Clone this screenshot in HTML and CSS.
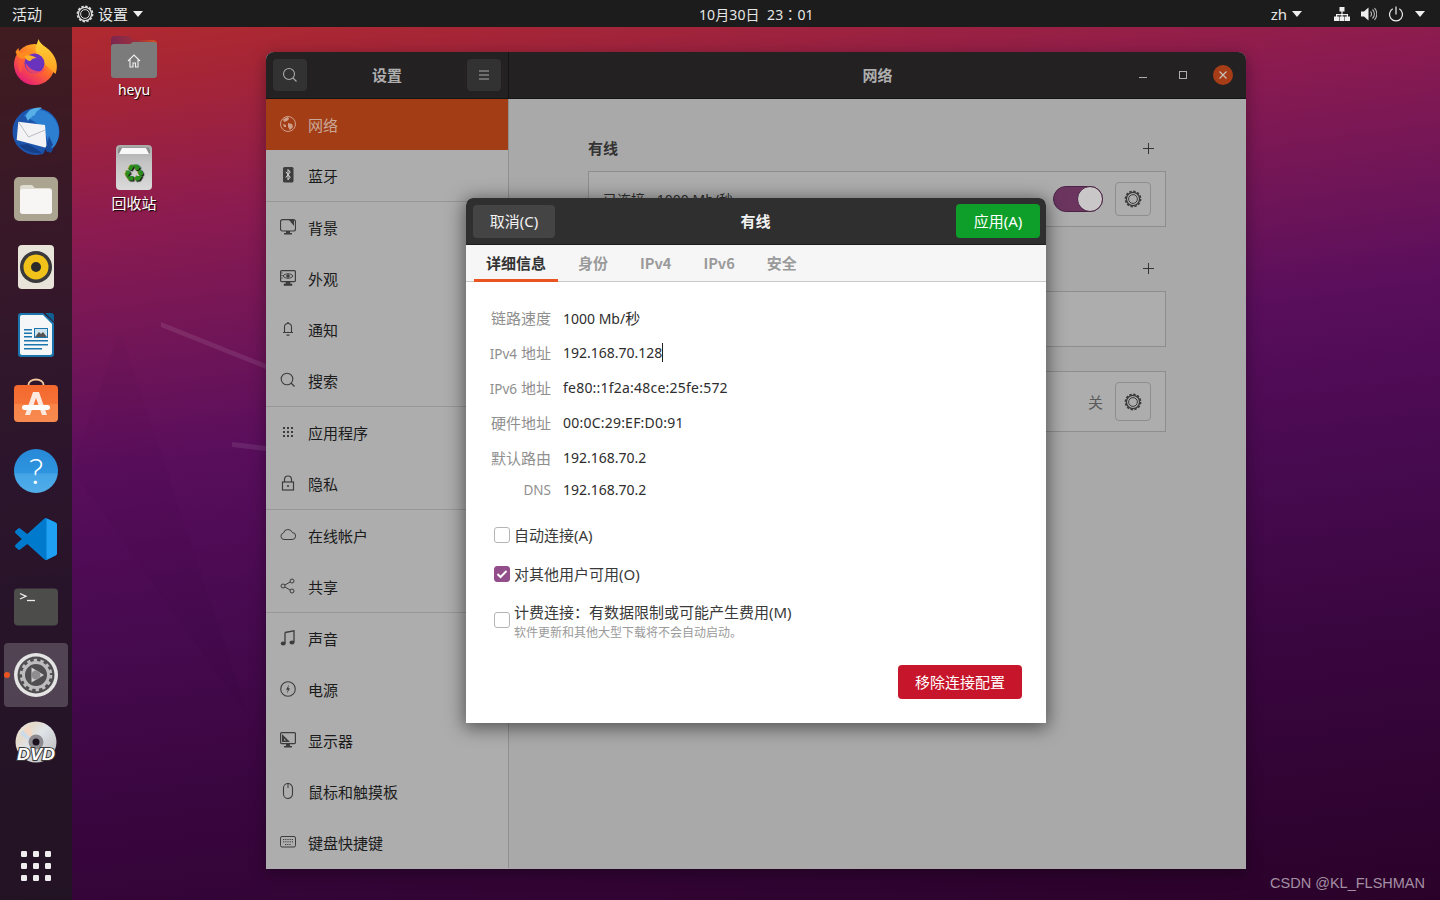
FILE: index.html
```html
<!DOCTYPE html>
<html lang="zh">
<head>
<meta charset="utf-8">
<title>设置</title>
<link rel="stylesheet" href="styles.css">
</head>
<body>
<svg class="defs" width="0" height="0">
  <defs>
    <symbol id="gear" viewBox="0 0 18 18">
      <circle cx="9" cy="9" r="6.6" fill="none" stroke="currentColor" stroke-width="1.3"/>
      <circle cx="9" cy="9" r="7.6" fill="none" stroke="currentColor" stroke-width="1.6" stroke-dasharray="2.4 1.58"/>
      <circle cx="9" cy="9" r="4.4" fill="none" stroke="currentColor" stroke-width="1"/>
    </symbol>
    <symbol id="caret" viewBox="0 0 10 6"><path d="M0 0h10L5 6z" fill="currentColor"/></symbol>
    <linearGradient id="ffbase" x1=".9" y1=".1" x2=".25" y2="1"><stop offset="0" stop-color="#ffc81f"/><stop offset=".5" stop-color="#ff6a2b"/><stop offset="1" stop-color="#e4177f"/></linearGradient>
    <linearGradient id="fftop" x1="0" y1="0" x2="0" y2="1"><stop offset="0" stop-color="#ffd83a"/><stop offset="1" stop-color="#ff9a1f"/></linearGradient>
    <linearGradient id="help" x1="0" y1="0" x2="0" y2="1"><stop offset="0" stop-color="#2789d8"/><stop offset=".55" stop-color="#2f95e0"/><stop offset=".56" stop-color="#43a4e5"/><stop offset="1" stop-color="#52aeea"/></linearGradient>
    <linearGradient id="store" x1="0" y1="0" x2="0" y2="1"><stop offset="0" stop-color="#f4682d"/><stop offset=".5" stop-color="#f57238"/><stop offset=".51" stop-color="#f78447"/><stop offset="1" stop-color="#f78a50"/></linearGradient>
    <linearGradient id="disc" x1="0" y1="0" x2="1" y2="1"><stop offset="0" stop-color="#f3f3f3"/><stop offset=".25" stop-color="#e4d9c9"/><stop offset=".45" stop-color="#dfe3e8"/><stop offset="1" stop-color="#b5b5b5"/></linearGradient>
    <linearGradient id="trash" x1="0" y1="0" x2="0" y2="1"><stop offset="0" stop-color="#a9a9a9"/><stop offset=".4" stop-color="#c4c4c4"/><stop offset="1" stop-color="#dadada"/></linearGradient>
    <linearGradient id="foldertab" x1="0" y1="0" x2="1" y2="0"><stop offset="0" stop-color="#7b2650"/><stop offset=".6" stop-color="#a1303b"/><stop offset="1" stop-color="#d8501f"/></linearGradient>
  </defs>
</svg>

<div class="desktop">
  <svg class="wallpaper" viewBox="0 0 1440 900" aria-hidden="true">
    <path d="M161 322l105 42v5l-105-42z" fill="#fff" opacity=".09"/>
    <path d="M232 442l34 4v5l-34-4z" fill="#fff" opacity=".09"/>
    <path d="M120 330L250 720 72 470z" fill="#000" opacity=".02"/>
  </svg>

  <header class="topbar">
    <div class="bar-left">
      <span class="bar-item activities">活动</span>
      <span class="bar-item appmenu">
        <svg class="bar-gear"><use href="#gear"/></svg>
        <span>设置</span>
        <svg class="caret"><use href="#caret"/></svg>
      </span>
    </div>
    <div class="clock">10月30日&nbsp; 23<span class="tc" lang="zh-Hant-TW">：</span>01</div>
    <div class="bar-right">
      <span class="bar-item ime"><span>zh</span><svg class="caret"><use href="#caret"/></svg></span>
      <span class="tray">
        <svg class="tray-icon" viewBox="0 0 16 16"><path d="M5.5 1h5v4.500h-5zM7.400 5.500h1.200v2.500H14v3h-1.200V9.200H8.600V11H7.400V9.200H3.200V11H2V8h5.400z" fill="currentColor"/><path d="M0 10.500h5V15H0zM5.500 10.500h5V15h-5zM11 10.500h5V15h-5z" fill="currentColor"/></svg>
        <svg class="tray-icon" viewBox="0 0 16 16"><path d="M0 5.500h3L7.500 1.500v13L3 10.500H0z" fill="currentColor"/><path d="M9.500 5.500a3.500 3.500 0 0 1 0 5M11.500 3.500a6.300 6.300 0 0 1 0 9M13.500 2a9 9 0 0 1 0 12" fill="none" stroke="currentColor" stroke-opacity=".75" stroke-width="1.100"/></svg>
        <svg class="tray-icon" viewBox="0 0 16 16"><path d="M4.700 2.800a6.500 6.500 0 1 0 6.600 0" fill="none" stroke="currentColor" stroke-width="1.200"/><path d="M8 .5v8" stroke="currentColor" stroke-width="1.200"/></svg>
        <svg class="caret"><use href="#caret"/></svg>
      </span>
    </div>
  </header>

  <nav class="dock">
    <div class="dock-item">
      <svg class="app app46" viewBox="0 0 46 46">
        <circle cx="23" cy="25.500" r="20.500" fill="url(#ffbase)"/>
        <path d="M27 0c2 7 12 9 16 18 3 6 3 12 1 17l-11-10c-2-6-8-8-9-14 0-4 2-7 3-11z" fill="url(#fftop)"/>
        <path d="M4 13c1-2 2-3 3-4 0 3 1 4 3 5 4-2 7-2 10-1l5 4c-5-1-8 0-11 2l-4 1c-3-1-4-3-6-7z" fill="#ff8a1f"/>
        <path d="M8 18c-2 5-2 11 1 16 2-3 2-7 3-11z" fill="#ff5a3a" opacity=".7"/>
        <circle cx="23" cy="24.500" r="10" fill="#6a33bd"/>
        <path d="M13 17c5-2 9 0 12 2-3 0-5 1-6 3-3 0-5-2-6-5z" fill="#ffb12a"/>
        <path d="M14 24c0 7 5 11 11 11 5 0 9-3 10-8-2 4-6 6-10 5-5-1-8-4-11-8z" fill="#ff4a5c" opacity=".8"/>
      </svg>
    </div>
    <div class="dock-item">
      <svg class="app app48" viewBox="0 0 48 48">
        <circle cx="24" cy="24.500" r="23.500" fill="#1d55ad"/>
        <path d="M12 9C17 2 27 1 35 5c7 4 12 12 12 20 0 7-3 14-9 19 1-4 0-7-2-9-2-10-9-20-24-26z" fill="#2c7fd1"/>
        <path d="M18 3c4-2 8-3 12-2-3 2-6 3-7 7-3 1-6 4-7 6l-2-4c0-3 2-5 4-7z" fill="#56b0e6"/>
        <path d="M6.300 14.700L33 18l1.700 23L4.700 33z" fill="#f3f3f5"/>
        <path d="M6.500 15l10 15 16.500-7" fill="none" stroke="#b9bcc4"/>
        <path d="M7 38l9-1 10 6 4 3c-9 1-18-2-23-8z" fill="#163f8a"/>
        <path d="M34 19l3 10-2 9-5 8 5-2 4 2 3-4-3-2 2-2-4-9z" fill="#184a9c"/>
        <path d="M30 49l4-7 2 7zM39 46l3-6 3 3-1 4z" fill="#37182a"/>
      </svg>
    </div>
    <div class="dock-item">
      <svg class="app app44" viewBox="0 0 44 44">
        <rect width="44" height="44" rx="5" fill="#aaa491"/>
        <path d="M6 11a3 3 0 0 1 3-3h9l3 3h14a3 3 0 0 1 3 3v20a3 3 0 0 1-3 3H9a3 3 0 0 1-3-3z" fill="#dfdcd2"/>
        <path d="M6 15a3 3 0 0 1 3-3h26a3 3 0 0 1 3 3v19a3 3 0 0 1-3 3H9a3 3 0 0 1-3-3z" fill="#f7f6f4"/>
      </svg>
    </div>
    <div class="dock-item">
      <svg class="app app44" viewBox="0 0 36 44">
        <rect width="36" height="44" rx="4" fill="#e8e4d9"/>
        <circle cx="18" cy="22" r="16" fill="#3a3a3c"/>
        <circle cx="18" cy="22" r="12.500" fill="#f1c21a"/>
        <circle cx="18" cy="22" r="5" fill="#2b2b2b"/>
      </svg>
    </div>
    <div class="dock-item">
      <svg class="app app44" viewBox="0 0 36 44">
        <path d="M3 0h22l11 10v31a3 3 0 0 1-3 3H3a3 3 0 0 1-3-3V3a3 3 0 0 1 3-3z" fill="#1b76ae"/>
        <path d="M4 2h21l9 9v29a2 2 0 0 1-2 2H4a2 2 0 0 1-2-2V4a2 2 0 0 1 2-2z" fill="#f4f6f8"/>
        <path d="M27 0h6a3 3 0 0 1 3 3v6z" fill="#0f5f92"/>
        <path d="M6 16h8v1.500H6zM6 19.500h8V21H6zM6 23h8v1.500H6zM6 27h24v1.500H6zM6 31h24v1.500H6zM6 35h18v1.500H6z" fill="#1b76ae"/>
        <rect x="16.500" y="15.500" width="13" height="9" fill="#cfe3ef" stroke="#1b76ae"/>
        <path d="M17 24l4-5 2 2 2-2 4 5z" fill="#555"/>
      </svg>
    </div>
    <div class="dock-item">
      <svg class="app app44" viewBox="0 0 44 44">
        <path d="M14.500 5V3.500a7.500 5 0 0 1 15 0V5" fill="none" stroke="#f5c99f" stroke-width="1.800"/>
        <rect y="4" width="44" height="37" rx="4" fill="url(#store)"/>
        <path d="M11 34l8-23h6l8 23h-5l-6-17-6 17z" fill="#fbe9df"/>
        <rect x="8" y="24" width="28" height="5" rx="2.500" fill="#fff"/>
      </svg>
    </div>
    <div class="dock-item">
      <svg class="app app44" viewBox="0 0 44 44">
        <circle cx="22" cy="22" r="22" fill="url(#help)"/>
        <text class="help-mark" x="22" y="35" text-anchor="middle">?</text>
      </svg>
    </div>
    <div class="dock-item">
      <svg class="app app42" viewBox="0 0 100 100">
        <path d="M70.900 99.300a6.200 6.200 0 0 0 4.970-.19l20.600-9.900A6.250 6.250 0 0 0 100 83.570V16.430a6.250 6.250 0 0 0-3.540-5.630L75.860.9a6.220 6.220 0 0 0-7.100 1.200L29.350 38.100 12.180 25.060a4.160 4.160 0 0 0-5.320.24L1.350 30.300a4.170 4.170 0 0 0 0 6.160L16.250 50 1.350 63.540a4.170 4.170 0 0 0 0 6.160l5.510 5a4.160 4.160 0 0 0 5.320.24l17.170-13.040 39.410 35.960a6.200 6.200 0 0 0 2.140 1.440zM75 27.300L45.100 50 75 72.700z" fill="#007acc"/>
        <path d="M75 .3l.86.6 20.600 9.900A6.250 6.250 0 0 1 100 16.430v67.140a6.250 6.250 0 0 1-3.530 5.640l-20.600 9.900-.87.300z" fill="#1fa0f2"/>
      </svg>
    </div>
    <div class="dock-item">
      <svg class="app app44" viewBox="0 0 44 37">
        <rect width="44" height="37" rx="4" fill="#4c4c4a"/>
        <path d="M6 5l6 2.800L6 10.500" fill="none" stroke="#eee" stroke-width="1.300"/>
        <path d="M13 12h8" stroke="#eee" stroke-width="1.300"/>
      </svg>
    </div>
    <div class="dock-item running">
      <svg class="app app44" viewBox="0 0 44 44">
        <circle cx="22" cy="22" r="22" fill="#e4e4e4"/>
        <circle cx="22" cy="22" r="18.500" fill="#504e50"/>
        <circle cx="22" cy="22" r="12.500" fill="none" stroke="#bdbdbd" stroke-width="3"/>
        <circle cx="22" cy="22" r="14.800" fill="none" stroke="#bdbdbd" stroke-width="3" stroke-dasharray="3.400 3.300"/>
        <path d="M17.500 14.500L30 22l-12.500 7.500z" fill="#cfcfcf"/>
        <circle cx="22" cy="22" r="4.500" fill="#8f8d8f"/>
      </svg>
    </div>
    <div class="dock-item">
      <svg class="app app44" viewBox="0 0 44 44">
        <circle cx="22" cy="21" r="20.500" fill="url(#disc)"/>
        <path d="M9 9a19 19 0 0 1 7-4l3 10a8 8 0 0 0-3 2z" fill="#f5d7c2" opacity=".8"/>
        <path d="M6 13a19 19 0 0 1 3-4l7 8-2 2z" fill="#c4dcf0" opacity=".8"/>
        <circle cx="22" cy="21" r="7.500" fill="#8d8a90"/>
        <circle cx="22" cy="21" r="3.500" fill="#1d1220"/>
        <text class="dvd-mark" x="22" y="39" text-anchor="middle" textLength="38" lengthAdjust="spacingAndGlyphs">DVD</text>
      </svg>
    </div>
    <div class="dock-item dock-grid">
      <svg class="app app30" viewBox="0 0 30 30">
        <g fill="#eee">
          <rect width="6" height="6" rx="1.200"/><rect x="12" width="6" height="6" rx="1.200"/><rect x="24" width="6" height="6" rx="1.200"/>
          <rect y="12" width="6" height="6" rx="1.200"/><rect x="12" y="12" width="6" height="6" rx="1.200"/><rect x="24" y="12" width="6" height="6" rx="1.200"/>
          <rect y="24" width="6" height="6" rx="1.200"/><rect x="12" y="24" width="6" height="6" rx="1.200"/><rect x="24" y="24" width="6" height="6" rx="1.200"/>
        </g>
      </svg>
    </div>
  </nav>

  <div class="desk-icon home-icon">
    <svg class="desk-glyph" viewBox="0 0 46 42" width="46" height="42">
      <path d="M0 4a4 4 0 0 1 4-4h14l4 4h20a4 4 0 0 1 4 4v10H0z" fill="url(#foldertab)"/>
      <path d="M0 11a3 3 0 0 1 3-3h16l3-2h21a3 3 0 0 1 3 3v30a3 3 0 0 1-3 3H3a3 3 0 0 1-3-3z" fill="#7b7b7b"/>
      <path d="M17 25l6-6 6 6M19 23.500V31h3v-4h2.500v4H27v-7.500" fill="none" stroke="#f0f0f0" stroke-width="1.100"/>
    </svg>
    <span class="lat">heyu</span>
  </div>
  <div class="desk-icon trash-icon">
    <svg class="desk-glyph" viewBox="0 0 36 45" width="36" height="45">
      <rect width="36" height="45" rx="4" fill="url(#trash)"/>
      <path d="M3 2.500h30l1 3v3H2v-3z" fill="#8a8a8a"/>
      <path d="M6 3h24l3 6H3z" fill="#f8f8f8"/>
      <text class="recycle" x="18" y="37" text-anchor="middle">♻</text>
    </svg>
    <span>回收站</span>
  </div>

  <section class="settings">
    <div class="sidebar">
      <div class="head head-left">
        <button class="hbtn"><svg viewBox="0 0 16 16" width="16" height="16"><circle cx="7" cy="7" r="5.500" fill="none" stroke="currentColor" stroke-width="1.100"/><path d="M11 11l3.500 3.500" stroke="currentColor" stroke-width="1.100"/></svg></button>
        <h2 class="head-title">设置</h2>
        <button class="hbtn"><svg viewBox="0 0 16 16" width="16" height="16"><path d="M3 4h10M3 8h10M3 12h10" stroke="currentColor"/></svg></button>
      </div>
      <ul class="nav">
        <li class="nav-row selected"><svg class="nav-icon" viewBox="0 0 16 16"><circle cx="8" cy="8" r="7.500" fill="none" stroke="currentColor"/><path d="M3 3.500c2-1 3-2 5-2.500l1 2-2 2-3 1zM8 7l4 1 1 3-3 3-2-3zM3 8l3 1 0 2-2 0z" fill="currentColor"/></svg><span>网络</span></li>
        <li class="nav-row sep"><svg class="nav-icon" viewBox="0 0 16 16"><rect x="3" width="10.500" height="15.500" rx="1.500" fill="currentColor"/><path d="M5.800 4.800l4.400 5.400-2.200 2.600V2.500l2.200 2.600-4.400 5.400" fill="none" stroke="#ddd"/></svg><span>蓝牙</span></li>
        <li class="nav-row"><svg class="nav-icon" viewBox="0 0 16 16"><path d="M2.500.7h11a2 2 0 0 1 2 2V10a2 2 0 0 1-2 2h-11a2 2 0 0 1-2-2V2.700a2 2 0 0 1 2-2z" fill="none" stroke="currentColor" stroke-width="1.200"/><path d="M9 1h5v6z M6 12h4v2h2v1.500H4V14h2z" fill="currentColor"/></svg><span>背景</span></li>
        <li class="nav-row"><svg class="nav-icon" viewBox="0 0 16 16"><rect x=".6" y=".6" width="14.800" height="11" rx="1" fill="none" stroke="currentColor" stroke-width="1.200"/><path d="M3 6c2-3 8-3 10 0-2 3-8 3-10 0z" fill="none" stroke="currentColor"/><circle cx="8" cy="6" r="1.800" fill="currentColor"/><path d="M1 3h2M1 5.500h2M1 8h2M6 12h4v2h2v1.500H4V14h2z" stroke="currentColor" fill="currentColor" stroke-width=".6"/></svg><span>外观</span></li>
        <li class="nav-row"><svg class="nav-icon" viewBox="0 0 16 16"><path d="M4.500 11.500V6a3.500 3.500 0 0 1 7 0v5.500zM3 11.500h10" fill="none" stroke="currentColor" stroke-width="1.100"/><path d="M6.500 13.500h3v1.200h-3zM7.300 1h1.400v1.500H7.300z" fill="currentColor"/></svg><span>通知</span></li>
        <li class="nav-row sep"><svg class="nav-icon" viewBox="0 0 16 16"><circle cx="7" cy="7" r="5.800" fill="none" stroke="currentColor" stroke-width="1.100"/><path d="M11 11l3.500 3.500" stroke="currentColor" stroke-width="1.200"/></svg><span>搜索</span></li>
        <li class="nav-row"><svg class="nav-icon" viewBox="0 0 16 16"><g fill="currentColor"><rect x="3" y="3" width="2" height="2"/><rect x="7" y="3" width="2" height="2"/><rect x="11" y="3" width="2" height="2"/><rect x="3" y="7" width="2" height="2"/><rect x="7" y="7" width="2" height="2"/><rect x="11" y="7" width="2" height="2"/><rect x="3" y="11" width="2" height="2"/><rect x="7" y="11" width="2" height="2"/><rect x="11" y="11" width="2" height="2"/></g></svg><span>应用程序</span></li>
        <li class="nav-row sep"><svg class="nav-icon" viewBox="0 0 16 16"><rect x="2.500" y="7" width="11" height="8" fill="none" stroke="currentColor" stroke-width="1.200"/><path d="M4.500 7V4.500a3.500 3.500 0 0 1 7 0V7" fill="none" stroke="currentColor" stroke-width="1.200"/><circle cx="8" cy="11" r="1.100" fill="currentColor"/></svg><span>隐私</span></li>
        <li class="nav-row"><svg class="nav-icon" viewBox="0 0 16 16"><path d="M4 12.500a3.300 3.300 0 0 1-.5-6.500 4.600 4.600 0 0 1 8.800-.5 3.500 3.500 0 0 1-.3 7z" fill="none" stroke="currentColor"/></svg><span>在线帐户</span></li>
        <li class="nav-row sep"><svg class="nav-icon" viewBox="0 0 16 16"><circle cx="3" cy="8" r="2" fill="none" stroke="currentColor"/><circle cx="12" cy="3" r="2" fill="none" stroke="currentColor"/><circle cx="12" cy="13" r="2" fill="none" stroke="currentColor"/><path d="M4.800 7l5.500-3M4.800 9l5.500 3" stroke="currentColor"/></svg><span>共享</span></li>
        <li class="nav-row"><svg class="nav-icon" viewBox="0 0 16 16"><path d="M5 2.500L14 .8V12" fill="none" stroke="currentColor" stroke-width="1.300"/><path d="M5 2.500V13" stroke="currentColor" stroke-width="1.300"/><ellipse cx="3.200" cy="13.500" rx="2.500" ry="2" fill="currentColor"/><ellipse cx="12" cy="12.500" rx="2.500" ry="2" fill="currentColor"/></svg><span>声音</span></li>
        <li class="nav-row"><svg class="nav-icon" viewBox="0 0 16 16"><circle cx="8" cy="8" r="7.300" fill="none" stroke="currentColor" stroke-width="1.100"/><path d="M9 3.500L6 8.800h1.800L7 12.500l3-5.300H8.200z" fill="currentColor"/></svg><span>电源</span></li>
        <li class="nav-row"><svg class="nav-icon" viewBox="0 0 16 16"><rect x=".6" y=".6" width="14.800" height="11" rx="1" fill="none" stroke="currentColor" stroke-width="1.200"/><path d="M2 2l8 8H2zM4 6.500V8.500h2zM6 12h4v2h2v1.500H4V14h2z" fill="currentColor"/></svg><span>显示器</span></li>
        <li class="nav-row"><svg class="nav-icon" viewBox="0 0 16 16"><path d="M3.500 5a4.500 4.500 0 0 1 9 0v6a4.500 4.500 0 0 1-9 0z" fill="none" stroke="currentColor" stroke-width="1.100"/><path d="M8 .8V5" stroke="currentColor"/></svg><span>鼠标和触摸板</span></li>
        <li class="nav-row"><svg class="nav-icon" viewBox="0 0 16 16"><rect x=".5" y="2.500" width="15" height="10.500" rx="1.500" fill="none" stroke="currentColor"/><path d="M3 5.500h10M3 7.800h10M5 10.500h6" stroke="currentColor" stroke-dasharray="1 .8"/></svg><span>键盘快捷键</span></li>
      </ul>
    </div>
    <div class="panel">
      <div class="head head-right">
        <h2 class="head-title">网络</h2>
        <div class="wincontrols">
          <span class="wc"><svg viewBox="0 0 12 12" width="12" height="12"><path d="M2 8.500h8" stroke="currentColor"/></svg></span>
          <span class="wc"><svg viewBox="0 0 12 12" width="12" height="12"><rect x="2.500" y="2.500" width="7" height="7" fill="none" stroke="currentColor"/></svg></span>
          <span class="wc wc-close"><svg viewBox="0 0 12 12" width="12" height="12"><path d="M2.500 2.500l7 7M9.500 2.500l-7 7" stroke="currentColor" stroke-width="1.200"/></svg></span>
        </div>
      </div>
      <div class="panel-body">
        <div class="sec-head"><h3>有线</h3><svg class="plus" viewBox="0 0 12 12"><path d="M6 0v12M0 6h12" stroke="currentColor"/></svg></div>
        <div class="box box-wired">
          <span class="box-text">已连接 - 1000 Mb/秒</span>
          <span class="switch"><span class="knob"></span></span>
          <button class="gear-btn"><svg class="gear-ic"><use href="#gear"/></svg></button>
        </div>
        <div class="sec-head sec-two"><span></span><svg class="plus" viewBox="0 0 12 12"><path d="M6 0v12M0 6h12" stroke="currentColor"/></svg></div>
        <div class="box box-empty"></div>
        <div class="box box-proxy">
          <span class="off">关</span>
          <button class="gear-btn tall"><svg class="gear-ic"><use href="#gear"/></svg></button>
        </div>
      </div>
    </div>
  </section>

  <section class="dialog">
    <div class="dlg-head">
      <button class="dlg-btn cancel">取消(C)</button>
      <h2>有线</h2>
      <button class="dlg-btn apply">应用(A)</button>
    </div>
    <div class="tabs">
      <span class="tab active">详细信息</span>
      <span class="tab">身份</span>
      <span class="tab tab-lat">IPv4</span>
      <span class="tab tab-lat">IPv6</span>
      <span class="tab">安全</span>
    </div>
    <div class="dlg-body">
      <dl class="details">
        <dt>链路速度</dt><dd class="top"><span class="lat">1000 Mb/</span>秒</dd>
        <dt><span class="lat">IPv4</span> 地址</dt><dd><span class="lat caret-text">192.168.70.128</span></dd>
        <dt><span class="lat">IPv6</span> 地址</dt><dd><span class="lat wide">fe80::1f2a:48ce:25fe:572</span></dd>
        <dt>硬件地址</dt><dd><span class="lat wide">00:0C:29:EF:D0:91</span></dd>
        <dt>默认路由</dt><dd><span class="lat">192.168.70.2</span></dd>
        <dt class="short"><span class="lat">DNS</span></dt><dd class="short"><span class="lat">192.168.70.2</span></dd>
      </dl>
      <div class="check-row first"><span class="cb"></span><span>自动连接<span class="lat">(A)</span></span></div>
      <div class="check-row second"><span class="cb on"><svg viewBox="0 0 16 16" width="16" height="16"><path d="M3.500 8l3 3 6-6" fill="none" stroke="#fff" stroke-width="2"/></svg></span><span>对其他用户可用<span class="lat">(O)</span></span></div>
      <div class="check-row third"><span class="cb"></span><span class="two-line"><span>计费连接：有数据限制或可能产生费用<span class="lat">(M)</span></span><small>软件更新和其他大型下载将不会自动启动。</small></span></div>
      <div class="dlg-foot"><button class="remove">移除连接配置</button></div>
    </div>
  </section>

  <div class="watermark">CSDN @KL_FLSHMAN</div>
</div>
</body>
</html>
```

FILE: styles.css
```css
* { box-sizing: border-box; }
html, body { margin: 0; padding: 0; height: 100%; }
body {
  font-family: "Noto Sans", "Noto Sans CJK SC", sans-serif;
  font-size: 15px;
  overflow: hidden;
}
.defs { position: absolute; }
button { font: inherit; border: 0; padding: 0; }
h2, h3 { margin: 0; font-size: 15px; }
.lat { font-size: 14px; }

.desktop {
  position: relative;
  width: 1440px;
  height: 900px;
  overflow: hidden;
  background: linear-gradient(172deg, #b62c2a 0%, #a42538 10%, #8b1b50 22%, #6f1558 34%, #590e5c 44%, #480a50 58%, #3a0640 74%, #2a0229 100%);
}
.wallpaper { position: absolute; inset: 0; width: 1440px; height: 900px; }

/* top bar */
.topbar {
  position: absolute;
  inset: 0 0 auto 0;
  height: 27px;
  background: #1c1c1c;
  color: #e6e6e6;
  display: grid;
  grid-template-columns: 687px auto 1fr;
  align-items: center;
  padding-left: 12px;
  padding-right: 15px;
  font-size: 15px;
}
.bar-left { display: flex; align-items: center; }
.bar-item { display: inline-flex; align-items: center; }
.activities { margin-right: 34px; }
.appmenu { gap: 5px; }
.bar-gear { width: 18px; height: 18px; margin-right: -1px; color: #ddd; }
.caret { width: 10px; height: 6px; color: #eee; }
.clock { font-size: 14px; letter-spacing: .1px; }
.tc { font-family: "Noto Sans CJK TC", sans-serif; }
.bar-right { display: flex; justify-content: flex-end; align-items: center; }
.ime { gap: 5px; margin-right: 32px; }
.tray { display: flex; align-items: center; gap: 11px; }
.tray-icon { width: 16px; height: 16px; color: #eee; }

/* dock */
.dock {
  position: absolute;
  left: 0;
  top: 27px;
  bottom: 0;
  width: 72px;
  background: rgba(29, 24, 29, .76);
  display: flex;
  flex-direction: column;
  padding-top: 2px;
}
.dock-item {
  height: 68px;
  flex: none;
  display: flex;
  align-items: center;
  justify-content: center;
  position: relative;
}
.running::before {
  content: "";
  position: absolute;
  left: 4px;
  top: 2px;
  width: 64px;
  height: 64px;
  border-radius: 4px;
  background: rgba(255, 255, 255, .2);
}
.running::after {
  content: "";
  position: absolute;
  left: 4px;
  top: 31px;
  width: 6px;
  height: 6px;
  border-radius: 50%;
  background: #e95420;
}
.running .app { position: relative; }
.dock-grid { margin-top: auto; }
.app { display: block; overflow: visible; }
.app46 { width: 46px; height: 46px; transform: translate(-1.5px, -1px); }
.app48 { width: 48px; height: 48px; }
.app44 { width: 44px; height: 44px; }
.app42 { width: 42px; height: 42px; }
.app30 { width: 30px; height: 30px; }
.help-mark { font-family: "Lato", "Liberation Sans", sans-serif; font-weight: 300; font-size: 36px; fill: #fff; }
.dvd-mark {
  font-family: "Liberation Sans", sans-serif;
  font-size: 17px;
  font-weight: 700;
  font-style: italic;
  fill: #fff;
  stroke: #3a3a3a;
  stroke-width: 2px;
  paint-order: stroke;
}

/* desktop icons */
.desk-icon {
  position: absolute;
  width: 90px;
  display: flex;
  flex-direction: column;
  align-items: center;
  color: #fff;
  font-size: 15px;
  line-height: 20px;
  text-shadow: 1px 1px 1px #000;
}
.home-icon { left: 89px; top: 36px; gap: 2px; }
.trash-icon { left: 89px; top: 145px; gap: 3px; }
.desk-glyph { display: block; }
.recycle { font-family: "DejaVu Sans", sans-serif; font-size: 25px; fill: #2b8c1f; }

/* settings window */
.settings {
  position: absolute;
  left: 266px;
  top: 52px;
  width: 980px;
  height: 817px;
  display: grid;
  grid-template-columns: 243px 1fr;
  background: #a9a9a9;
  border-radius: 8px 8px 0 0;
  box-shadow: 0 4px 16px rgba(0, 0, 0, .35);
  overflow: hidden;
}
.head {
  height: 47px;
  background: #232122;
  color: #aeaeae;
  display: flex;
  align-items: center;
  border-bottom: 1px solid #141414;
}
.head-title { font-size: 15px; font-weight: 700; padding-bottom: 2px; }
.head-left { justify-content: space-between; padding: 0 7px; border-right: 1px solid #141414; }
.hbtn {
  width: 34px;
  height: 32px;
  border-radius: 4px;
  background: #333232;
  color: #a9a9a9;
  display: flex;
  align-items: center;
  justify-content: center;
}
.sidebar { background: #adadad; }
.nav { list-style: none; margin: 0; padding: 0; border-right: 1px solid #8f8f8f; }
.nav-row {
  height: 51px;
  display: flex;
  align-items: center;
  gap: 12px;
  padding-left: 14px;
  color: #1b1b1b;
  font-size: 15px;
}
.nav-row.sep { height: 52px; border-bottom: 1px solid #979797; }
.nav-row.selected { background: #a33d16; color: #c9a898; }
.nav-icon { width: 16px; height: 16px; flex: none; color: #3d3d3d; margin-top: -2px; }
.selected .nav-icon { color: #cf9f8a; }

.panel { min-width: 0; }
.head-right { position: relative; justify-content: center; }
.wincontrols { position: absolute; right: 13px; top: 13px; display: flex; gap: 20px; align-items: center; }
.wc { width: 20px; height: 20px; display: flex; align-items: center; justify-content: center; color: #aeaeae; }
.wc-close { border-radius: 50%; background: #a63d17; color: #c9c0bc; }
.panel-body { padding: 38px 80px 0 79px; color: #2e2e2e; }
.sec-head { height: 22px; display: flex; align-items: center; justify-content: space-between; padding-right: 12px; }
.sec-head h3 { font-size: 15px; font-weight: 700; color: #333; padding-bottom: 2px; }
.sec-two { margin-top: 30px; }
.plus { width: 11px; height: 11px; color: #2a2a2a; }
.box { border: 1px solid #8e8e8e; background: #adadad; display: flex; align-items: center; }
.box-wired { height: 56px; margin-top: 12px; padding: 0 14px; }
.box-text { margin-right: auto; font-size: 14px; }
.switch {
  width: 50px;
  height: 26px;
  border-radius: 13px;
  background: #6b3560;
  border: 1px solid #4c2345;
  position: relative;
  margin-right: 12px;
}
.knob {
  position: absolute;
  right: -1px;
  top: -1px;
  width: 26px;
  height: 26px;
  border-radius: 50%;
  background: #c9c7c8;
  border: 1px solid #4c2345;
}
.gear-btn {
  width: 36px;
  height: 34px;
  border: 1px solid #8e8e8e;
  border-radius: 4px;
  background: #adadad;
  color: #3a3a3a;
  display: flex;
  align-items: center;
  justify-content: center;
}
.gear-btn.tall { height: 39px; }
.gear-ic { width: 18px; height: 18px; }
.box-empty { height: 56px; margin-top: 12px; }
.box-proxy { height: 61px; margin-top: 24px; padding: 0 14px; justify-content: flex-end; }
.off { color: #5b5b5b; margin-right: 12px; font-size: 15px; }

/* dialog */
.dialog {
  position: absolute;
  left: 466px;
  top: 198px;
  width: 580px;
  height: 525px;
  background: #fff;
  border-radius: 7px 7px 0 0;
  box-shadow: 0 3px 18px 2px rgba(0, 0, 0, .5);
  display: flex;
  flex-direction: column;
  overflow: hidden;
}
.dlg-head {
  height: 47px;
  flex: none;
  background: #302f2f;
  color: #fff;
  display: flex;
  align-items: center;
  justify-content: space-between;
  padding: 0 6px 0 7px;
  border-bottom: 1px solid #1e1e1e;
}
.dlg-head h2 { font-size: 15px; font-weight: 700; color: #f2f2f2; padding-bottom: 2px; }
.dlg-btn { height: 33px; border-radius: 4px; color: #f2f2f2; font-size: 15px; padding-bottom: 2px; }
.cancel { width: 82px; background: #454444; }
.apply { width: 84px; height: 34px; background: #0e9f2a; color: #fff; }
.tabs {
  height: 37px;
  flex: none;
  background: #f6f6f6;
  border-bottom: 1px solid #c9c9c9;
  display: flex;
  gap: 8px;
  padding-left: 8px;
}
.tab {
  padding: 0 12px;
  height: 37px;
  line-height: 36px;
  font-weight: 700;
  font-size: 15px;
  color: #9a9a9a;
  font-family: "Noto Sans CJK SC", sans-serif;
}
.tab-lat { font-size: 14.5px; }
.tab.active { color: #333; border-bottom: 3px solid #e95420; }
.dlg-body { flex: 1; padding: 18px 24px 24px; color: #2d2d2d; display: flex; flex-direction: column; }
.details {
  margin: 0;
  display: grid;
  grid-template-columns: 61px 1fr;
  grid-auto-rows: 35px;
  column-gap: 12px;
  align-items: center;
}
.details dt { color: #8f8f8f; text-align: right; white-space: nowrap; justify-self: end; }
.details dt .lat { font-size: 13.5px; }
.details dd { margin: 0; color: #2d2d2d; white-space: nowrap; }
.details dd:not(.top) { transform: translateY(-1px); }
.wide { letter-spacing: .22px; }
.details dt.short { align-self: start; margin-top: 4px; }
.details dd.short { align-self: start; margin-top: 4px; transform: none; }
.caret-text { border-right: 1px solid #222; }
.check-row { display: flex; align-items: center; gap: 4px; font-size: 15px; line-height: 20px; color: #3a3a3a; }
.check-row .lat { font-size: 15px; }
.first { margin-top: 15px; }
.second { margin-top: 19px; }
.third { margin-top: 18px; align-items: flex-start; }
.third .cb { margin-top: 10px; }
.cb {
  width: 16px;
  height: 16px;
  flex: none;
  border: 1px solid #b5b5b5;
  border-radius: 3px;
  background: #fff;
  margin-left: 4px;
  display: block;
}
.cb.on { background: #924d8b; border-color: #924d8b; }
.cb.on svg { display: block; margin: -1px; }
.two-line { display: flex; flex-direction: column; }
.two-line small { font-size: 12px; line-height: 16px; margin-top: 3px; color: #9a9a9a; }
.dlg-foot { margin-top: auto; display: flex; justify-content: flex-end; }
.remove { width: 124px; height: 34px; border-radius: 4px; background: #c7162b; color: #fff; font-size: 15px; padding-bottom: 2px; }

.watermark {
  position: absolute;
  right: 15px;
  bottom: 9px;
  font-family: "Liberation Sans", sans-serif;
  font-size: 14.5px;
  color: #a48fa4;
}
```
